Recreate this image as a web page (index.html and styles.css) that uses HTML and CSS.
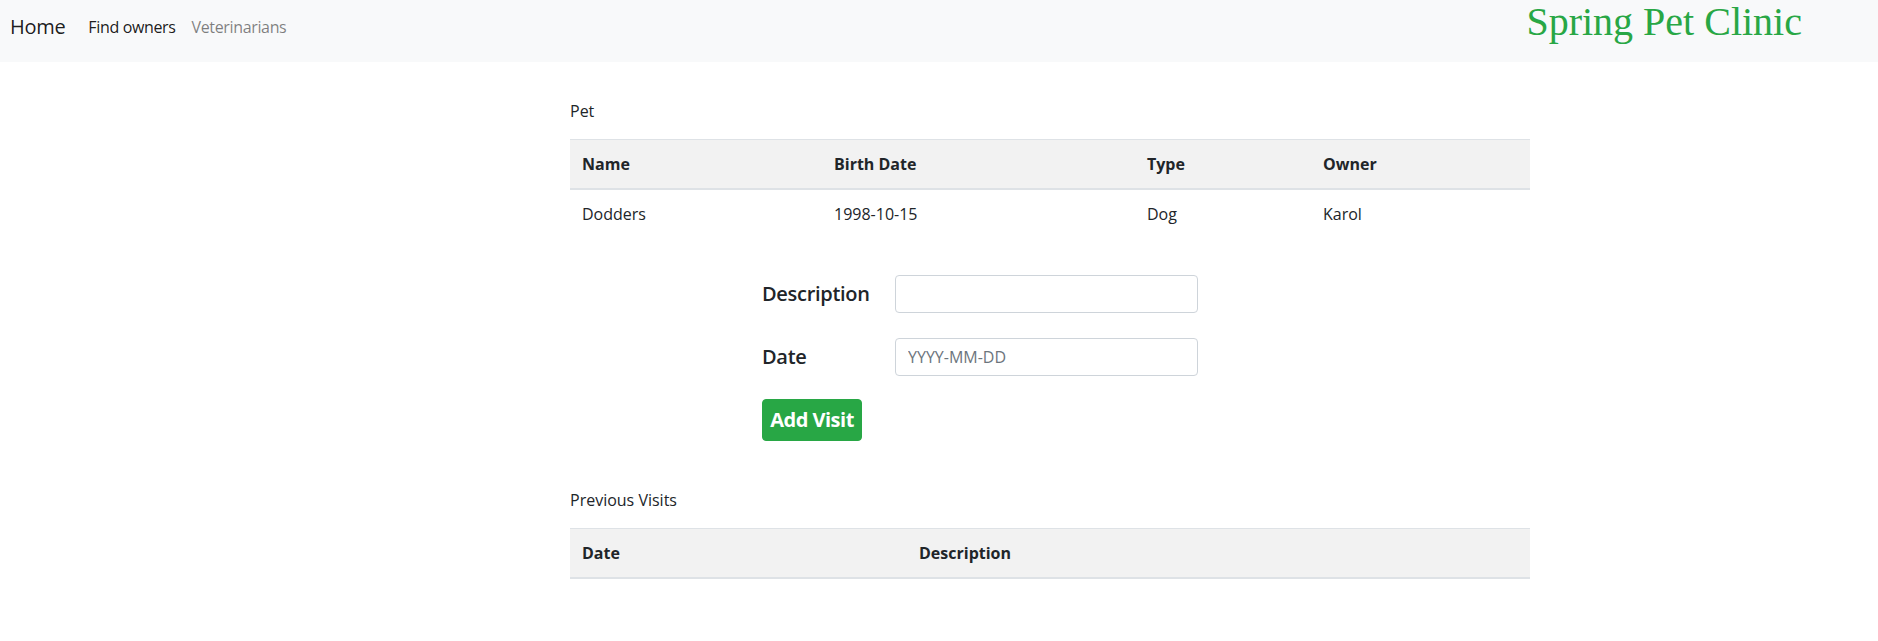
FILE: index.html
```html
<!DOCTYPE html>
<html lang="en">
<head>
<meta charset="utf-8">
<title>Spring Pet Clinic</title>
<link rel="stylesheet" href="styles.css">
</head>
<body>
<nav class="navbar">
  <a class="brand" href="#">Home</a>
  <ul class="nav-links">
    <li><a class="nav-link active" href="#">Find owners</a></li>
    <li><a class="nav-link" href="#">Veterinarians</a></li>
  </ul>
  <h1 class="site-title">Spring Pet Clinic</h1>
</nav>

<main class="content">
  <h2 class="section-title">Pet</h2>
  <table class="table pet-table">
    <thead>
      <tr><th>Name</th><th>Birth Date</th><th>Type</th><th>Owner</th></tr>
    </thead>
    <tbody>
      <tr><td>Dodders</td><td>1998-10-15</td><td>Dog</td><td>Karol</td></tr>
    </tbody>
  </table>

  <form class="visit-form">
    <div class="form-row">
      <label class="form-label" for="description">Description</label>
      <input class="form-input" id="description" type="text">
    </div>
    <div class="form-row">
      <label class="form-label" for="date">Date</label>
      <input class="form-input" id="date" type="text" placeholder="YYYY-MM-DD">
    </div>
    <div class="form-actions">
      <button class="btn-add" type="button">Add Visit</button>
    </div>
  </form>

  <h2 class="section-title visits-title">Previous Visits</h2>
  <table class="table visits-table">
    <thead>
      <tr><th>Date</th><th>Description</th></tr>
    </thead>
  </table>
</main>
</body>
</html>
```

FILE: styles.css
```css
* { box-sizing: border-box; }

body {
  margin: 0;
  font-family: "Segoe UI", "Open Sans", "Noto Sans", sans-serif;
  font-size: 16px;
  line-height: 1.5;
  color: #212529;
  background: #fff;
}

.navbar {
  display: flex;
  align-items: flex-start;
  height: 62px;
  background: #f8f9fa;
  padding: 0 76px 0 10px;
}

.brand {
  font-size: 20px;
  line-height: 30px;
  margin-top: 12px;
  color: rgba(0, 0, 0, 0.9);
  text-decoration: none;
  margin-right: 15px;
  letter-spacing: -0.3px;
}

.nav-links {
  display: flex;
  list-style: none;
  margin: 15px 0 0;
  padding: 0;
}

.nav-link {
  display: block;
  padding: 0 8px;
  line-height: 24px;
  color: rgba(0, 0, 0, 0.5);
  text-decoration: none;
  letter-spacing: -0.35px;
}

.nav-link.active { color: rgba(0, 0, 0, 0.9); }

.site-title {
  margin: 0 0 0 auto;
  font-family: "Liberation Serif", "Times New Roman", serif;
  font-weight: normal;
  font-size: 40px;
  line-height: 44px;
  color: #28a745;
}

.content {
  width: 960px;
  margin-left: 570px;
  padding-top: 37px;
}

.section-title {
  margin: 0 0 16px;
  font-size: 16px;
  font-weight: 500;
  line-height: 24px;
}

.table {
  width: 100%;
  border-collapse: collapse;
}

.table th,
.table td {
  text-align: left;
  padding: 12px;
  line-height: 24px;
  vertical-align: top;
}

.table thead th {
  background: #f2f2f2;
  font-weight: 700;
  border-top: 1px solid #dee2e6;
  border-bottom: 2px solid #dee2e6;
}

.pet-table th:nth-child(1) { width: 252px; }
.pet-table th:nth-child(2) { width: 313px; }
.pet-table th:nth-child(3) { width: 176px; }

.visits-table th:nth-child(1) { width: 337px; }

.visit-form {
  padding-left: 192px;
  margin-top: 32px;
}

.form-row {
  display: flex;
  align-items: center;
  height: 47px;
  margin-bottom: 16px;
}

.form-label {
  width: 133px;
  font-size: 20px;
  font-weight: 600;
  line-height: 30px;
  letter-spacing: -0.3px;
}

.form-input {
  width: 303px;
  height: 38px;
  padding: 6px 12px;
  border: 1px solid #ced4da;
  border-radius: 4px;
  font-family: inherit;
  font-size: 16px;
  color: #495057;
  background: #fff;
}

.form-input::placeholder { color: #6c757d; }

.form-actions {
  padding-top: 3px;
}

.btn-add {
  width: 100px;
  height: 42px;
  padding: 0;
  border: 1px solid #28a745;
  border-radius: 4px;
  background: #28a745;
  color: #fff;
  font-family: inherit;
  font-size: 20px;
  font-weight: 700;
  line-height: 30px;
  letter-spacing: -0.5px;
}

.visits-title {
  margin-top: 47px;
}
```
